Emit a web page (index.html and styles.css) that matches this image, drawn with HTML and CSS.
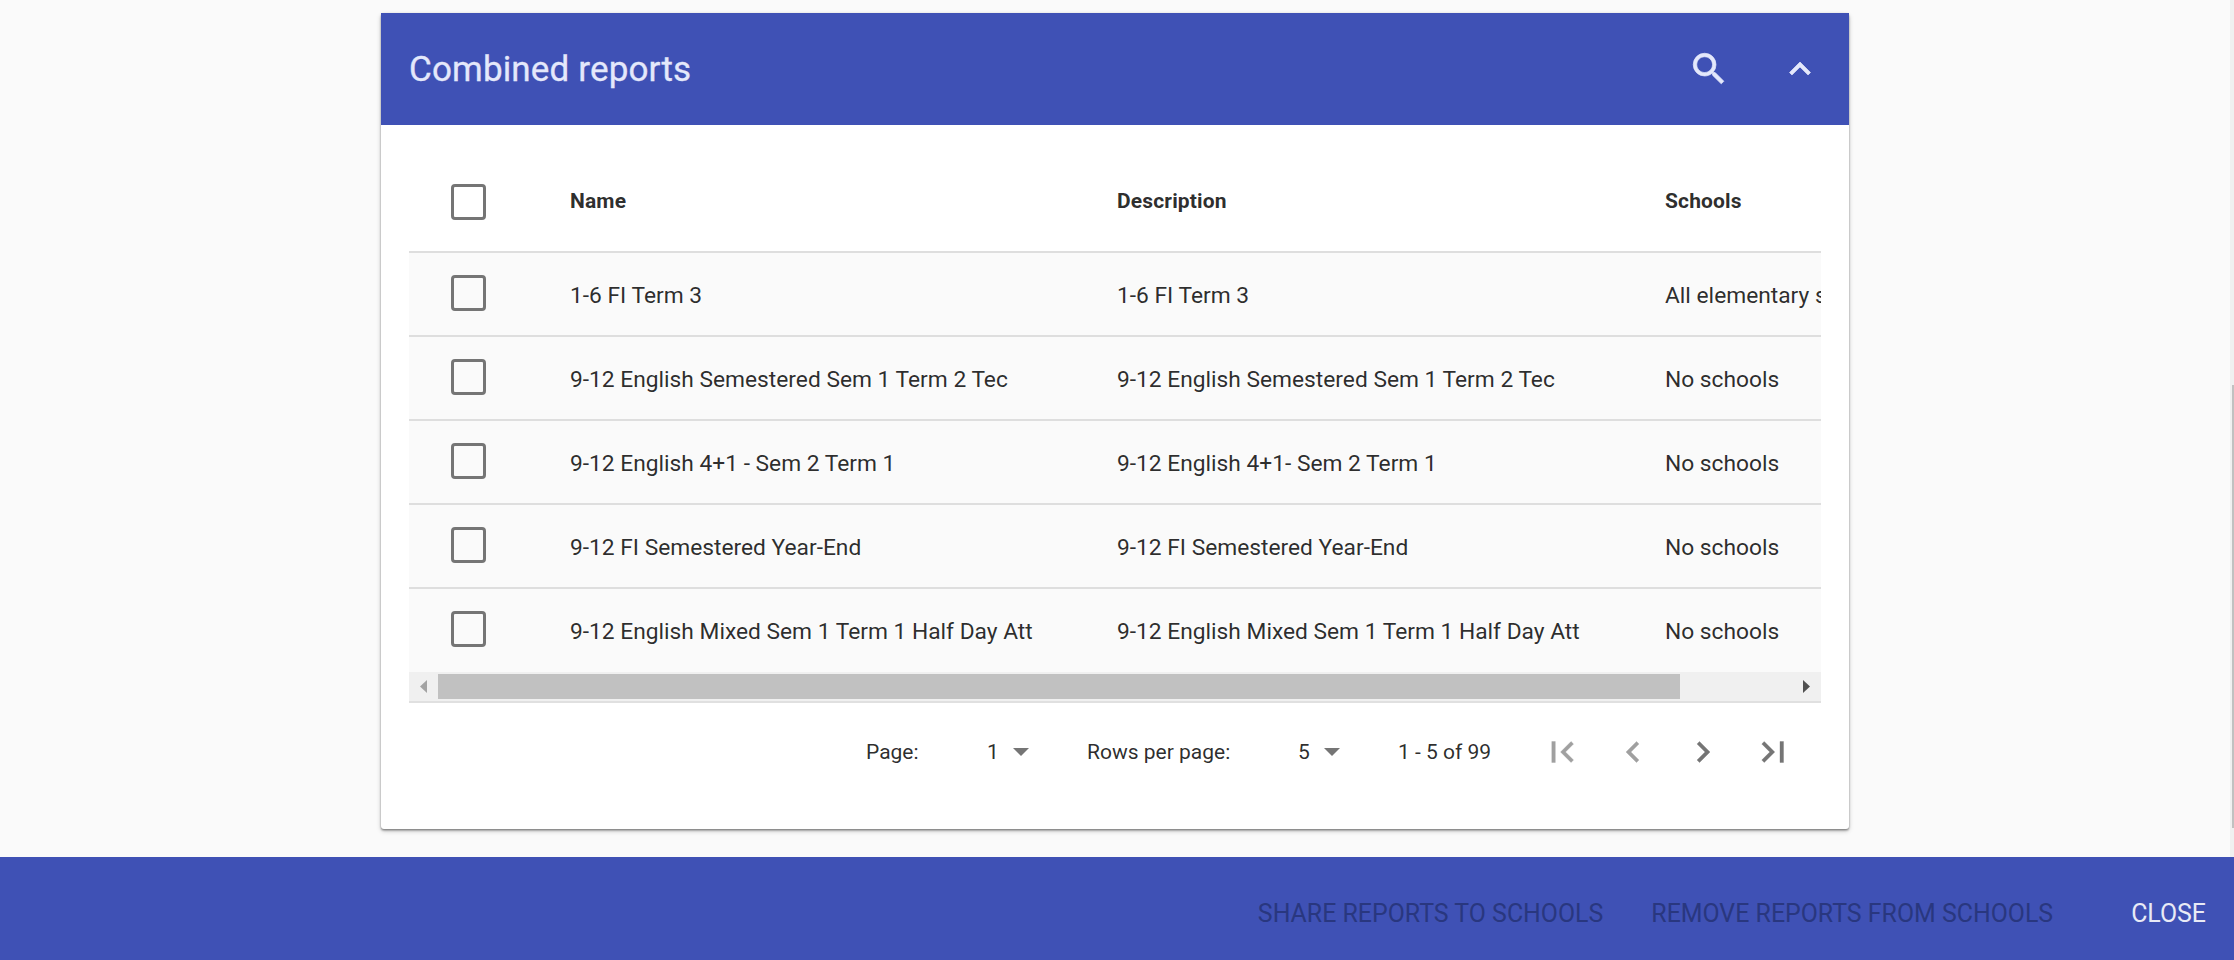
FILE: index.html
```html
<!DOCTYPE html>
<html lang="en">
<head>
<meta charset="utf-8">
<title>Combined reports</title>
<link rel="stylesheet" href="styles.css">
</head>
<body>
<div class="page">
  <main class="content">
    <section class="card">
      <header class="card-header">
        <h2 class="card-title">Combined reports</h2>
        <svg class="icon search" viewBox="0 0 24 24"><path d="M15.5 14h-.79l-.28-.27A6.471 6.471 0 0 0 16 9.5 6.5 6.5 0 1 0 9.5 16c1.61 0 3.09-.59 4.23-1.57l.27.28v.79l5 4.99L20.49 19l-4.99-5zm-6 0C7.01 14 5 11.99 5 9.5S7.01 5 9.5 5 14 7.01 14 9.5 11.99 14 9.5 14z"/></svg>
        <svg class="icon expand" viewBox="0 0 24 24"><path d="M12 8l-6 6 1.41 1.41L12 10.83l4.59 4.58L18 14z"/></svg>
      </header>
      <div class="table">
        <div class="row head"><span class="check"><i class="box"></i></span><span class="cell">Name</span><span class="cell">Description</span><span class="cell">Schools</span></div>
        <div class="row"><span class="check"><i class="box"></i></span><span class="cell">1-6 FI Term 3</span><span class="cell">1-6 FI Term 3</span><span class="cell">All elementary schools</span></div>
        <div class="row"><span class="check"><i class="box"></i></span><span class="cell">9-12 English Semestered Sem 1 Term 2 Tec</span><span class="cell">9-12 English Semestered Sem 1 Term 2 Tec</span><span class="cell">No schools</span></div>
        <div class="row"><span class="check"><i class="box"></i></span><span class="cell">9-12 English 4+1 - Sem 2 Term 1</span><span class="cell">9-12 English 4+1- Sem 2 Term 1</span><span class="cell">No schools</span></div>
        <div class="row"><span class="check"><i class="box"></i></span><span class="cell">9-12 FI Semestered Year-End</span><span class="cell">9-12 FI Semestered Year-End</span><span class="cell">No schools</span></div>
        <div class="row"><span class="check"><i class="box"></i></span><span class="cell">9-12 English Mixed Sem 1 Term 1 Half Day Att</span><span class="cell">9-12 English Mixed Sem 1 Term 1 Half Day Att</span><span class="cell">No schools</span></div>
      </div>
      <div class="scrollbar">
        <svg class="arrow dim" viewBox="0 0 7 13"><path d="M7 0v13L0 6.5z"/></svg>
        <div class="track"><div class="thumb"></div></div>
        <svg class="arrow" viewBox="0 0 7 13"><path d="M0 0v13l7-6.5z"/></svg>
      </div>
      <div class="pagination">
        <span class="page-label">Page:</span>
        <span class="select">1<i class="caret"></i></span>
        <span class="rows-label">Rows per page:</span>
        <span class="select">5<i class="caret"></i></span>
        <span class="range">1 - 5 of 99</span>
        <div class="pager">
          <svg class="icon dim" viewBox="0 0 24 24"><path d="M18.41 16.59L13.82 12l4.59-4.59L17 6l-6 6 6 6zM6 6h2v12H6z" transform="translate(-.4 0)"/></svg>
          <svg class="icon dim" viewBox="0 0 24 24"><path d="M15.41 7.41L14 6l-6 6 6 6 1.41-1.41L10.83 12z"/></svg>
          <svg class="icon" viewBox="0 0 24 24"><path d="M10 6L8.59 7.41 13.17 12l-4.58 4.59L10 18l6-6z"/></svg>
          <svg class="icon" viewBox="0 0 24 24"><path d="M5.59 7.41L10.18 12l-4.59 4.59L7 18l6-6-6-6zM16 6h2v12h-2z"/></svg>
        </div>
      </div>
    </section>
    <div class="page-scroll"><div class="page-thumb"></div></div>
  </main>
  <footer class="actions">
    <span class="action share">SHARE REPORTS TO SCHOOLS</span>
    <span class="action remove">REMOVE REPORTS FROM SCHOOLS</span>
    <span class="action close">CLOSE</span>
  </footer>
</div>
</body>
</html>
```
FILE: styles.css
```css
* { box-sizing: border-box; }
body { margin: 0; font-family: Roboto, "Liberation Sans", sans-serif; color: rgba(0, 0, 0, .84); background: #fafafa; overflow: hidden; }
.page { height: 960px; display: flex; flex-direction: column; }
.content { height: 857px; display: flex; justify-content: space-between; padding-left: 381px; }
.card { width: 1468px; height: 816px; margin-top: 13px; background: #fff; border-radius: 3px; box-shadow: 0 2px 5px rgba(0, 0, 0, .2), 0 2px 2px rgba(0, 0, 0, .16), 0 1px 2px rgba(0, 0, 0, .3); }
.card-header { height: 112px; display: flex; align-items: center; padding: 0 28px; background: #3f51b5; color: #e4e8fb; }
.card-title { flex: 1; margin: 0; font-size: 35px; font-weight: 400; letter-spacing: .15px; -webkit-text-stroke: .3px; }
.icon { display: block; width: 42px; height: 42px; fill: currentColor; stroke: currentColor; stroke-width: .2; }
.search { margin-right: 49px; stroke-width: .4; }
.expand { stroke-width: .4; }
.table { width: 1412px; margin: 0 28px; overflow: hidden; }
.row { width: 1700px; height: 84px; display: grid; grid-template-columns: 161px 547px 548px 444px; background: #fafafa; border-top: 2px solid #dedede; font-size: 22.75px; }
.row:last-child { height: 85px; }
.cell { line-height: 26px; padding-top: 30px; white-space: nowrap; }
.check { padding: 22px 0 0 42px; }
.box { display: block; width: 35px; height: 36px; border: 3px solid #757575; border-radius: 4px; }
.head { height: 126px; background: #fff; border: 0; font-size: 21px; font-weight: 700; letter-spacing: .15px; }
.head .check { padding-top: 59px; }
.head .cell { padding-top: 63px; }
.scrollbar { height: 31px; margin: 0 28px; padding: 0 11px; display: flex; align-items: center; background: #f0f0f0; border-bottom: 2px solid #e0e0e0; }
.arrow { width: 7px; height: 13px; fill: #505050; }
.arrow.dim { fill: #a3a3a3; }
.track { flex: 1; padding: 0 11px; }
.thumb { width: 1242px; height: 25px; background: #c1c1c1; }
.pagination { height: 98px; display: flex; align-items: center; padding-left: 485px; font-size: 21px; line-height: 28px; white-space: nowrap; }
.page-label { width: 121px; }
.rows-label { width: 211px; }
.select { width: 42px; margin-right: 58px; display: flex; align-items: center; justify-content: space-between; }
.caret { width: 16px; height: 8px; background: #757575; clip-path: polygon(0 0, 100% 0, 50% 100%); }
.range { width: 144px; }
.pager { display: flex; gap: 28px; color: #757575; }
.pager .dim { color: #a0a0a0; }
.page-scroll { width: 4px; height: 857px; padding: 385px 0 0 2px; background: #f0f0f0; }
.page-thumb { height: 443px; background: #c1c1c1; }
.actions { height: 103px; display: flex; justify-content: flex-end; align-items: center; padding: 11px 28px 0 0; background: #3f51b5; font-size: 24.9px; line-height: 32px; white-space: nowrap; }
.action { color: #29377f; }
.share { margin-right: 48px; }
.remove { margin-right: 78px; }
.action.close { color: #e8eaf6; }
```
